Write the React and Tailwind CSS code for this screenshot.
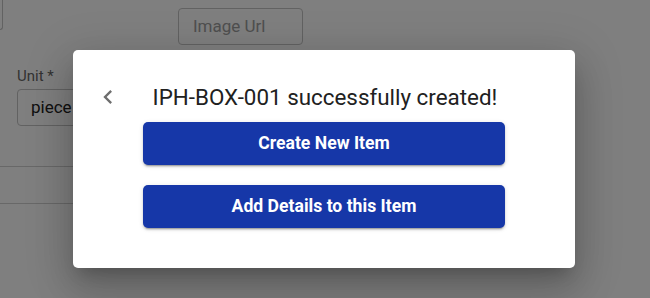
import React from "react";

export default function App() {
  return (
    <div className="relative w-[650px] h-[298px] overflow-hidden bg-white font-['Roboto',sans-serif]">
      {/* page behind the dialog */}
      <div className="flex flex-col">
        <div className="flex items-start h-[60px]">
          <div className="w-[3px] h-[30px] border-r border-b border-[#c4c4c4] rounded-br"></div>
          <div className="ml-[175px] mt-[8px] w-[125px] h-[37px] border border-[#c4c4c4] rounded flex items-center px-[14px] text-[17px] text-[#9e9e9e]">
            Image Url
          </div>
        </div>
        <div className="pl-[17px] mt-[8px] text-[15px] leading-[16px] text-[#666]">Unit *</div>
        <div className="ml-[17px] mt-[5px] w-[200px] h-[37px] border border-[#c4c4c4] rounded flex items-center px-[13px] text-[17px] text-[#222]">
          piece
        </div>
        <div className="mt-[40px] w-[560px] h-[38px] border-t border-b border-[#d0d0d0]"></div>
      </div>

      {/* overlay */}
      <div className="absolute inset-0 bg-black/50 flex items-start pt-[50px] pl-[73px]">
        <div className="w-[502px] h-[218px] bg-white rounded-[5px] shadow-[0_11px_15px_-7px_rgba(0,0,0,0.2),0_24px_38px_3px_rgba(0,0,0,0.14),0_9px_46px_8px_rgba(0,0,0,0.12)] flex flex-col items-center pt-[33px]">
          <div className="relative w-full text-center text-[22.4px] leading-[28px] text-[#212121] pl-[2px]">
            <button className="absolute left-[21px] top-0 w-[28px] h-[28px] text-[#6e6e6e]">
              <svg viewBox="0 0 24 24" width="28" height="28" fill="currentColor">
                <path d="M15.41 7.41 14 6l-6 6 6 6 1.41-1.41L10.83 12z" />
              </svg>
            </button>
            IPH-BOX-001 successfully created!
          </div>
          <div className="flex flex-col gap-[20px] mt-[11px]">
            <button className="w-[362px] h-[43px] rounded-[5px] bg-[#1637a8] text-white font-bold text-[17.6px] shadow-[0_3px_1px_-2px_rgba(0,0,0,0.2),0_2px_2px_0_rgba(0,0,0,0.14),0_1px_5px_0_rgba(0,0,0,0.12)]">
              Create New Item
            </button>
            <button className="w-[362px] h-[43px] rounded-[5px] bg-[#1637a8] text-white font-bold text-[17.6px] shadow-[0_3px_1px_-2px_rgba(0,0,0,0.2),0_2px_2px_0_rgba(0,0,0,0.14),0_1px_5px_0_rgba(0,0,0,0.12)]">
              Add Details to this Item
            </button>
          </div>
        </div>
      </div>
    </div>
  );
}
